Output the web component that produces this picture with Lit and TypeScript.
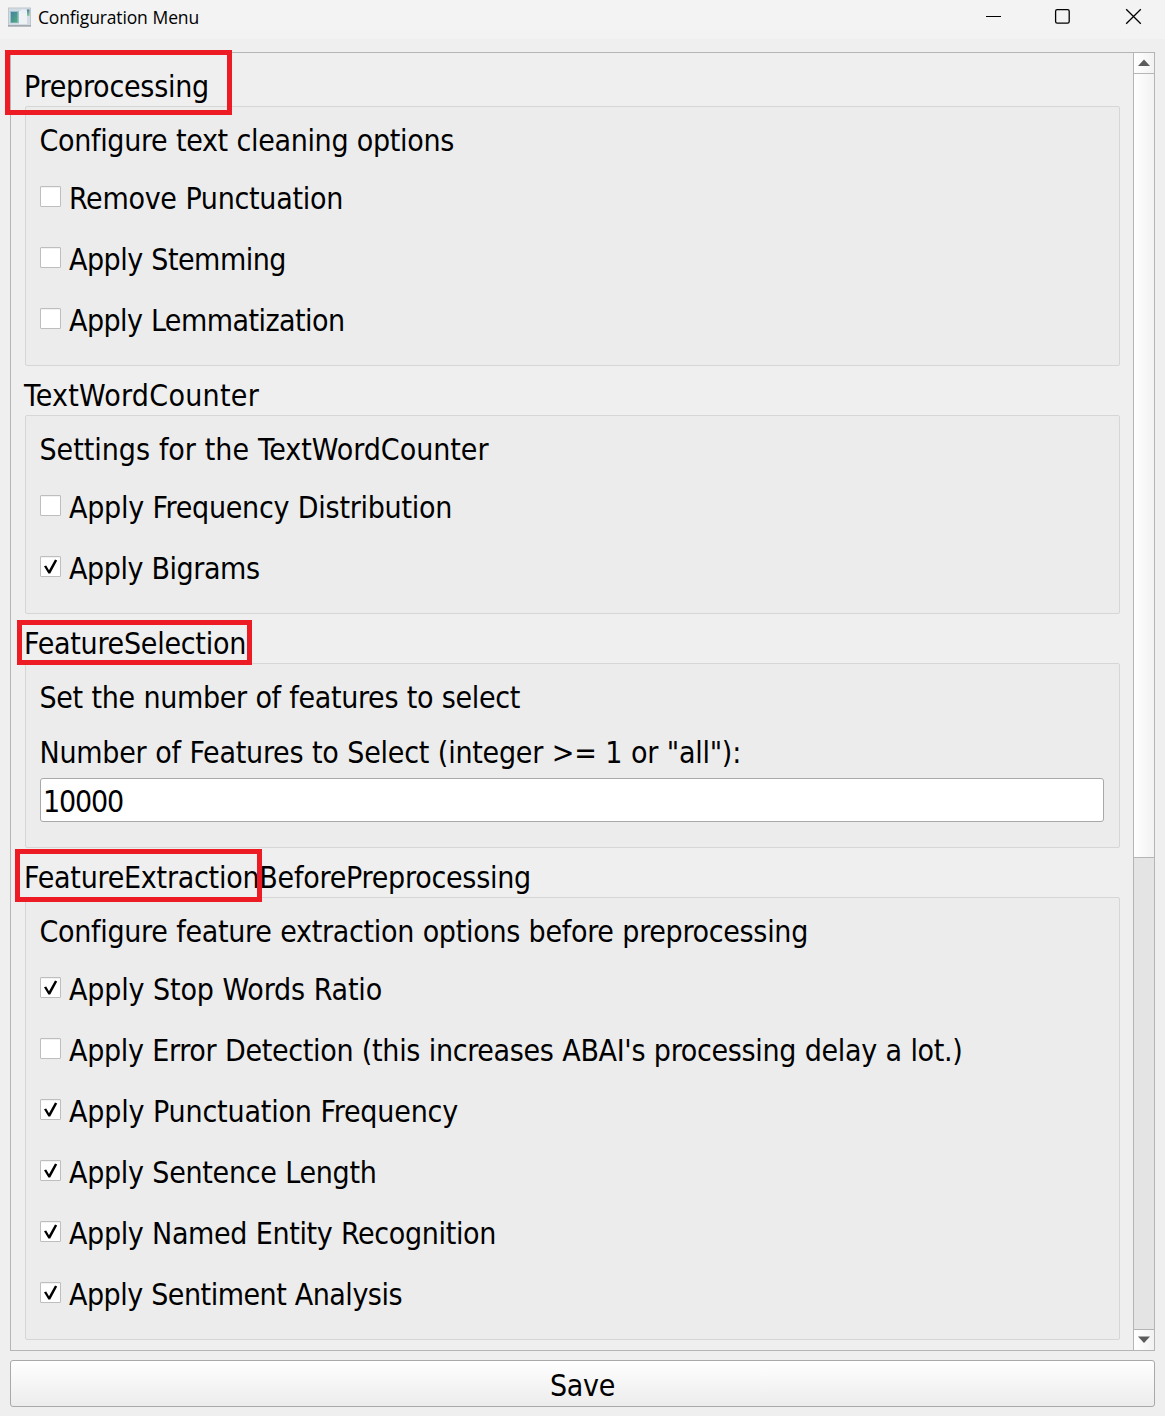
import { LitElement, html, css, nothing } from "lit";
import { customElement, property } from "lit/decorators.js";

interface Option { label: string; width: number; checked?: boolean }
interface Section {
  title: string; titleWidth: number; note: string; noteWidth: number;
  options?: Option[];
  field?: { label: string; width: number; value: string; valueWidth: number };
}

const SECTIONS: Section[] = [
  {
    title: "Preprocessing", titleWidth: 185,
    note: "Configure text cleaning options", noteWidth: 414.5,
    options: [
      { label: "Remove Punctuation", width: 274 },
      { label: "Apply Stemming", width: 217 },
      { label: "Apply Lemmatization", width: 275.5 },
    ],
  },
  {
    title: "TextWordCounter", titleWidth: 235,
    note: "Settings for the TextWordCounter", noteWidth: 449,
    options: [
      { label: "Apply Frequency Distribution", width: 383 },
      { label: "Apply Bigrams", width: 190.5, checked: true },
    ],
  },
  {
    title: "FeatureSelection", titleWidth: 222,
    note: "Set the number of features to select", noteWidth: 480.5,
    field: { label: 'Number of Features to Select (integer >= 1 or "all"):', width: 701.5, value: "10000", valueWidth: 80 },
  },
  {
    title: "FeatureExtractionBeforePreprocessing", titleWidth: 507,
    note: "Configure feature extraction options before preprocessing", noteWidth: 768.5,
    options: [
      { label: "Apply Stop Words Ratio", width: 313, checked: true },
      { label: "Apply Error Detection (this increases ABAI's processing delay a lot.)", width: 893.5 },
      { label: "Apply Punctuation Frequency", width: 389, checked: true },
      { label: "Apply Sentence Length", width: 307.5, checked: true },
      { label: "Apply Named Entity Recognition", width: 427, checked: true },
      { label: "Apply Sentiment Analysis", width: 333, checked: true },
    ],
  },
];

/** One line of text, tracked so that its advance equals `width`. */
@customElement("fit-text")
export class FitText extends LitElement {
  @property() text = "";
  @property({ type: Number }) width = 0;
  static styles = css`
    :host { display: inline-block; white-space: pre; }
  `;
  render() { return html`<span>${this.text}</span>`; }
  updated() {
    const span = this.renderRoot.querySelector("span")!;
    span.style.letterSpacing = "0px";
    const natural = span.getBoundingClientRect().width;
    span.style.letterSpacing = `${(this.width - natural) / this.text.length}px`;
  }
}

@customElement("app-root")
export class AppRoot extends LitElement {
  static styles = css`
    * { box-sizing: border-box; }
    :host {
      display: flex; flex-direction: column; position: relative;
      width: 1165px; height: 1416px; overflow: hidden;
      background: #efefef; color: #000;
      font: 30px/39px "DejaVu Sans Condensed", "DejaVu Sans", sans-serif;
      font-stretch: condensed; word-spacing: 0.4px;
    }
    .bar { display: flex; align-items: center; height: 39px; flex: none; background: #f3f3f3; }
    .appicon { width: 24px; height: 20px; margin: -6px 6px 0 8px; }
    .caption { flex: 1; font: 17.5px/24px "Open Sans", "Noto Sans", sans-serif; margin-top: -6px; word-spacing: 0.5px; }
    .controls { width: 180px; height: 39px; }
    svg { display: block; }
    .panel {
      display: flex; height: 1299px; margin: 13px 10px 0; flex: none;
      border: 1px solid #b5b5b5; overflow: hidden;
    }
    .list { flex: 1; padding: 4px 13px 0 14px; }
    .title { height: 49px; padding-top: 10px; margin-left: -1px; }
    .group { border: 1px solid #d6d6d6; border-radius: 2px; background: #ececec; padding: 0 15px 16px 14px; }
    .group.form { padding-bottom: 25px; }
    .note { height: 59px; padding-top: 14px; }
    .option { display: flex; align-items: center; height: 61px; gap: 8px; }
    .box { width: 21px; height: 21px; border: 1px solid #bebebe; border-radius: 1px; background: #fff; box-shadow: inset 0 1px 0 #f2f2f2; }
    .option fit-text { padding-top: 4px; }
    .note fit-text, .fieldlabel fit-text { margin-left: -0.5px; }
    .fieldlabel { padding-top: 10px; height: 55px; }
    .input { height: 44px; border: 1px solid #a9a9a9; border-radius: 3px; background: #fff; padding: 3px 0 0 2px; }
    .scroll { width: 21px; display: flex; flex-direction: column; border-left: 1px solid #b5b5b5; background: #e4e4e4; }
    .arrow { height: 21px; background: linear-gradient(90deg, #fff, #f2f2f2); }
    .arrow.up { border-bottom: 1px solid #b5b5b5; }
    .arrow.down { border-top: 1px solid #b5b5b5; margin-top: auto; }
    .thumb { height: 784px; background: linear-gradient(90deg, #fff, #f2f2f2); border-bottom: 1px solid #b5b5b5; }
    .save {
      display: flex; justify-content: center; align-items: center; flex: none;
      height: 47px; margin: 9px 10px 0; padding: 4px 0 0 0; border: 1px solid #a9a9a9; border-radius: 3px;
      background: linear-gradient(#fff, #ececec);
    }
    .mark { position: absolute; border: 5px solid #ed1c24; }
    .m1 { left: 5px; top: 50px; width: 227px; height: 65px; }
    .m2 { left: 17px; top: 620px; width: 235px; height: 45px; }
    .m3 { left: 15px; top: 849px; width: 247px; height: 53px; }
  `;

  private option(o: Option) {
    return html`<div class="option">
      <div class="box">${o.checked
        ? html`<svg width="19" height="19" viewBox="0 0 19 19"><path d="M3 9.2L5.2 8.6L8 13.2L14 2.6L16.2 3.4L9.2 16.4L7.4 16.4Z" fill="#000"/></svg>`
        : nothing}</div>
      <fit-text .text=${o.label} .width=${o.width}></fit-text>
    </div>`;
  }

  private section(s: Section) {
    return html`
      <div class="title"><fit-text .text=${s.title} .width=${s.titleWidth}></fit-text></div>
      <div class="group ${s.field ? "form" : ""}">
        <div class="note"><fit-text .text=${s.note} .width=${s.noteWidth}></fit-text></div>
        ${s.options?.map((o) => this.option(o))}
        ${s.field ? html`
          <div class="fieldlabel"><fit-text .text=${s.field.label} .width=${s.field.width}></fit-text></div>
          <div class="input"><fit-text .text=${s.field.value} .width=${s.field.valueWidth}></fit-text></div>` : nothing}
      </div>`;
  }

  render() {
    return html`
      <div class="bar">
        <svg class="appicon" viewBox="0 0 24 20">
          <defs>
            <linearGradient id="pane" x1="0" y1="0" x2="1" y2="1">
              <stop offset="0" stop-color="#477fa6"/><stop offset="1" stop-color="#4faf78"/>
            </linearGradient>
            <linearGradient id="side" x1="0" y1="0" x2="0" y2="1">
              <stop offset="0" stop-color="#55789c"/><stop offset="1" stop-color="#8fcfa0"/>
            </linearGradient>
          </defs>
          <rect x="0.5" y="1" width="22" height="18" fill="#d3dce4" stroke="#c0c8ce"/>
          <rect x="11" y="4" width="8" height="13" fill="#eef2f5"/>
          <rect x="2" y="4" width="9" height="12" fill="#9cc0cc"/>
          <rect x="3" y="5" width="6.5" height="10.5" fill="url(#pane)"/>
          <rect x="13" y="2.5" width="5" height="4" fill="#e8f0f6"/>
          <rect x="19" y="2.5" width="2.5" height="6.5" fill="url(#side)"/>
          <rect x="0" y="18" width="23" height="1.6" fill="#a3a9ae"/>
        </svg>
        <div class="caption"><fit-text .text=${"Configuration Menu"} .width=${161}></fit-text></div>
        <svg class="controls" viewBox="0 0 180 39" fill="none" stroke="#000">
          <path d="M1 16.5H16" stroke-width="1"/>
          <rect x="70.6" y="9.6" width="13.6" height="13.6" rx="1.6" stroke-width="1.3"/>
          <path d="M141.2 9.2L155.8 23.8M155.8 9.2L141.2 23.8" stroke-width="1.3"/>
        </svg>
      </div>
      <div class="panel">
        <div class="list">${SECTIONS.map((s) => this.section(s))}</div>
        <div class="scroll">
          <div class="arrow up"><svg width="20" height="20"><path d="M4 13L10 6.5L16 13Z" fill="#5a5a5a"/></svg></div>
          <div class="thumb"></div>
          <div class="arrow down"><svg width="20" height="20"><path d="M4 6.5L10 13L16 6.5Z" fill="#5a5a5a"/></svg></div>
        </div>
      </div>
      <div class="save"><fit-text .text=${"Save"} .width=${65}></fit-text></div>
      <div class="mark m1"></div>
      <div class="mark m2"></div>
      <div class="mark m3"></div>
    `;
  }
}
